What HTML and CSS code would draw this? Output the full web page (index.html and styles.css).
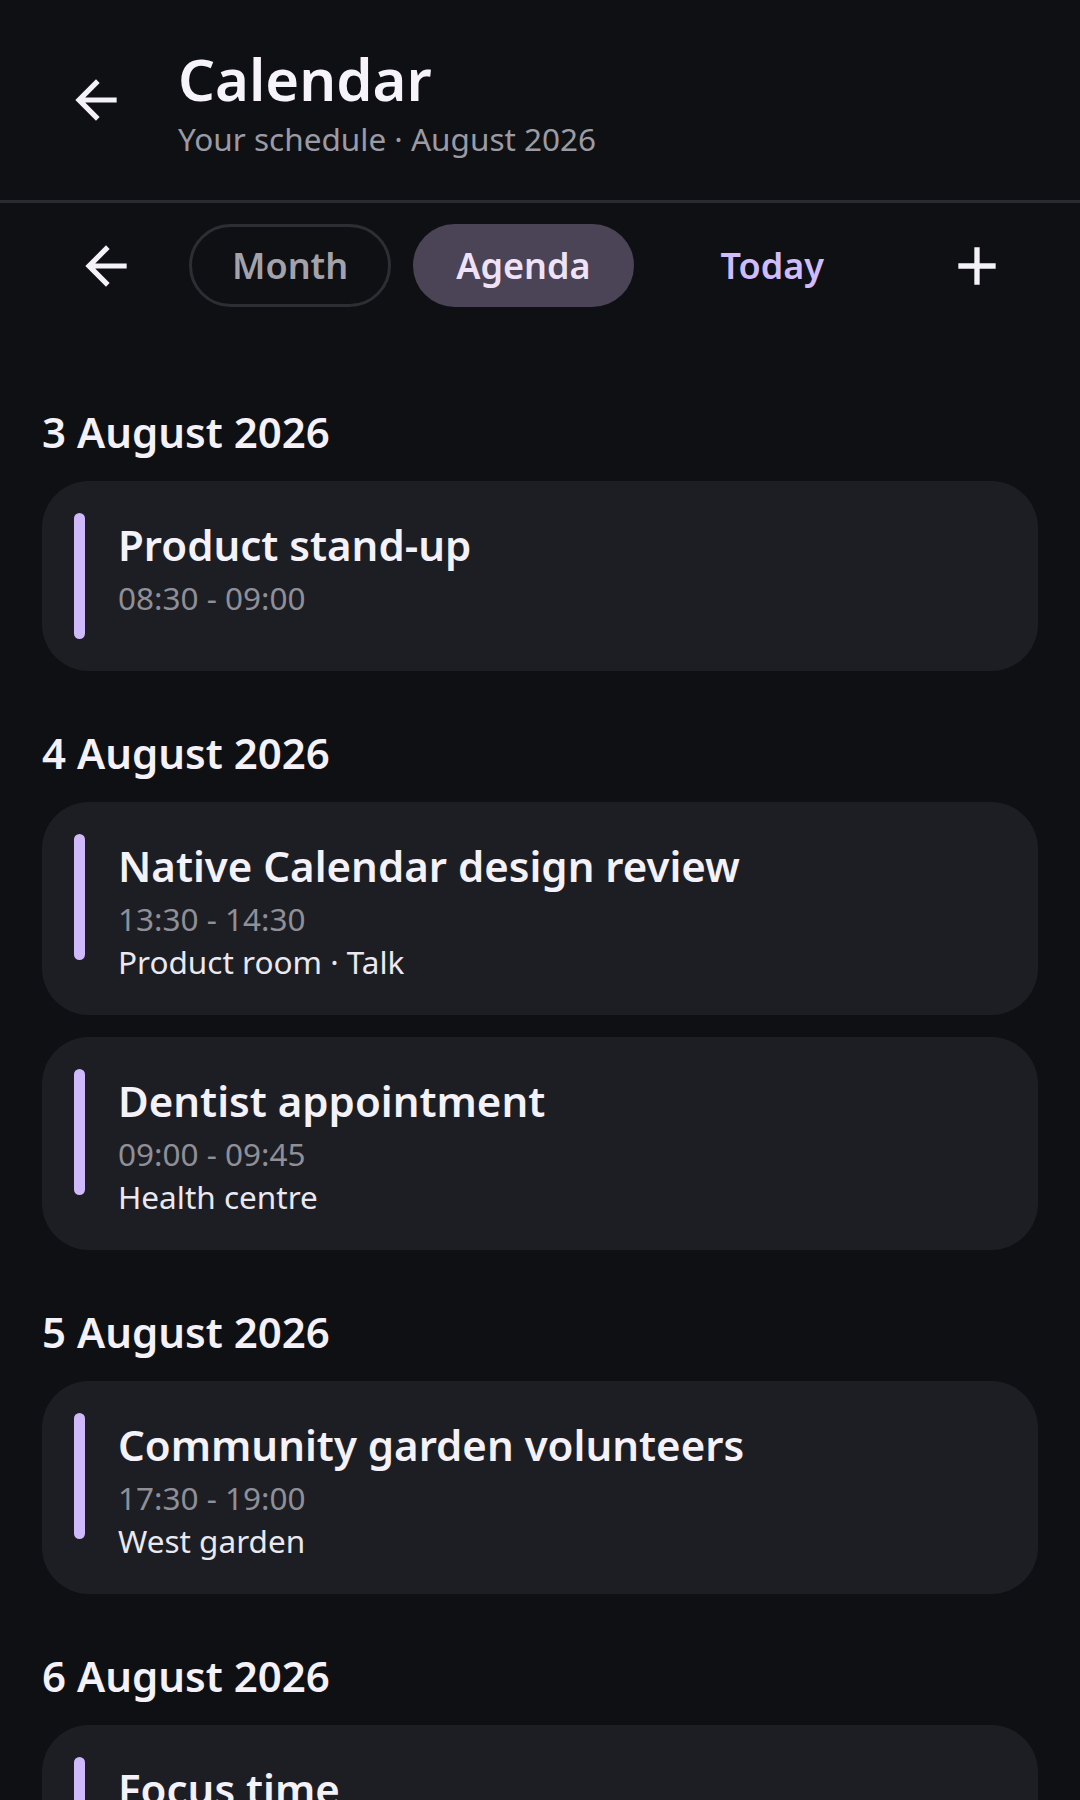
FILE: index.html
```html
<!DOCTYPE html>
<html lang="en">
<head>
<meta charset="utf-8">
<title>Calendar</title>
<link rel="stylesheet" href="styles.css">
</head>
<body>
<div class="app">
  <header class="topbar">
    <button class="icon-btn back-btn" aria-label="Back">
      <svg viewBox="0 0 24 24" class="icon"><path d="M20 11H7.83l5.59-5.59L12 4l-8 8 8 8 1.41-1.41L7.83 13H20v-2z"/></svg>
    </button>
    <div class="titles">
      <h1 class="title">Calendar</h1>
      <p class="subtitle">Your schedule · August 2026</p>
    </div>
  </header>

  <nav class="toolbar">
    <button class="icon-btn prev-btn" aria-label="Previous">
      <svg viewBox="0 0 24 24" class="icon"><path d="M20 11H7.83l5.59-5.59L12 4l-8 8 8 8 1.41-1.41L7.83 13H20v-2z"/></svg>
    </button>
    <button class="pill pill-outline">Month</button>
    <button class="pill pill-selected">Agenda</button>
    <button class="text-btn">Today</button>
    <button class="icon-btn add-btn" aria-label="Add event">
      <svg viewBox="0 0 24 24" class="icon icon-add"><path d="M19 13h-6v6h-2v-6H5v-2h6V5h2v6h6v2z"/></svg>
    </button>
  </nav>

  <main class="agenda">
    <section class="day">
      <h2 class="day-title">3 August 2026</h2>
      <div class="events">
        <article class="event">
          <span class="accent"></span>
          <div class="event-body">
            <h3 class="event-title">Product stand-up</h3>
            <p class="event-time">08:30 - 09:00</p>
          </div>
        </article>
      </div>
    </section>

    <section class="day">
      <h2 class="day-title">4 August 2026</h2>
      <div class="events">
        <article class="event">
          <span class="accent"></span>
          <div class="event-body">
            <h3 class="event-title">Native Calendar design review</h3>
            <p class="event-time">13:30 - 14:30</p>
            <p class="event-place">Product room · Talk</p>
          </div>
        </article>
        <article class="event">
          <span class="accent"></span>
          <div class="event-body">
            <h3 class="event-title">Dentist appointment</h3>
            <p class="event-time">09:00 - 09:45</p>
            <p class="event-place">Health centre</p>
          </div>
        </article>
      </div>
    </section>

    <section class="day">
      <h2 class="day-title">5 August 2026</h2>
      <div class="events">
        <article class="event">
          <span class="accent"></span>
          <div class="event-body">
            <h3 class="event-title">Community garden volunteers</h3>
            <p class="event-time">17:30 - 19:00</p>
            <p class="event-place">West garden</p>
          </div>
        </article>
      </div>
    </section>

    <section class="day">
      <h2 class="day-title">6 August 2026</h2>
      <div class="events">
        <article class="event">
          <span class="accent"></span>
          <div class="event-body">
            <h3 class="event-title">Focus time</h3>
          </div>
        </article>
      </div>
    </section>
  </main>
</div>
</body>
</html>
```

FILE: styles.css
```css
* {
  box-sizing: border-box;
}

html, body {
  margin: 0;
  padding: 0;
  background: #0f1014;
}

body {
  font-family: "Noto Sans", "Open Sans", sans-serif;
  color: #f4f1f8;
  width: 1080px;
  min-height: 1800px;
}

button {
  font-family: inherit;
  border: none;
  background: none;
  padding: 0;
  margin: 0;
  cursor: pointer;
}

h1, h2, h3, p {
  margin: 0;
}

.icon-btn {
  display: flex;
  align-items: center;
  justify-content: center;
  flex: none;
}

.icon {
  width: 62px;
  height: 62px;
  fill: #f4f1f8;
  display: block;
}

.icon-add {
  width: 64px;
  height: 64px;
}

/* Header */
.topbar {
  display: flex;
  align-items: flex-start;
  padding: 45px 0 40px 65px;
  border-bottom: 3px solid #2a2b30;
  height: 203px;
}

.back-btn {
  margin-top: 24px;
}

.titles {
  margin-left: 51px;
  display: flex;
  flex-direction: column;
}

.title {
  font-size: 58px;
  line-height: 68px;
  font-weight: 600;
  color: #f6f3fa;
}

.subtitle {
  margin-top: 6px;
  font-size: 31.5px;
  line-height: 40px;
  color: #9c9ba4;
}

/* Toolbar */
.toolbar {
  display: flex;
  align-items: center;
  padding: 21px 0 0 75px;
  height: 83px;
  box-sizing: content-box;
}

.pill {
  height: 83px;
  padding: 0 43px;
  border-radius: 42px;
  font-size: 36px;
  font-weight: 600;
  line-height: 83px;
}

.pill-outline {
  margin-left: 52px;
  border: 3px solid #2d2e33;
  color: #a3a2ab;
  padding: 0 40px;
  line-height: 77px;
}

.pill-selected {
  margin-left: 22px;
  background: #4b4356;
  color: #f0e2f6;
}

.text-btn {
  margin-left: 44px;
  padding: 0 43px;
  height: 83px;
  font-size: 36px;
  font-weight: 600;
  color: #d0bcfc;
}

.add-btn {
  margin-left: 78px;
}

/* Agenda */
.agenda {
  padding: 97px 42px 0 42px;
  display: flex;
  flex-direction: column;
  gap: 54px;
}

.day-title {
  font-size: 42px;
  line-height: 56px;
  font-weight: 600;
  color: #f4f1f8;
  margin-bottom: 21px;
}

.events {
  display: flex;
  flex-direction: column;
  gap: 22px;
}

.event {
  display: flex;
  align-items: flex-start;
  background: #1d1e23;
  border-radius: 47px;
  padding: 32px;
  min-height: 190px;
}

.accent {
  flex: none;
  width: 11px;
  height: 126px;
  border-radius: 6px;
  background: #cfb9fb;
}

.event-body {
  margin-left: 33px;
  padding: 4px 0 3px;
  display: flex;
  flex-direction: column;
  gap: 6px;
}

.event-title {
  font-size: 42px;
  line-height: 56px;
  font-weight: 600;
  color: #f4f1f8;
}

.event-time {
  font-size: 31.5px;
  line-height: 37px;
  color: #8f8f98;
}

.event-place {
  font-size: 31.5px;
  line-height: 37px;
  color: #ebe8f0;
}
```
